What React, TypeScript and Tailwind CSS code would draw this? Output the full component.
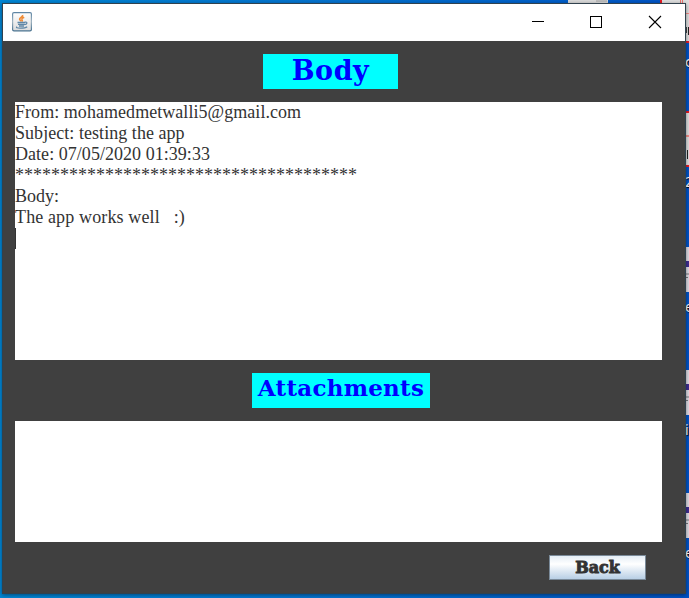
import React from "react";

const MESSAGE = [
  { text: "From: mohamedmetwalli5@gmail.com", style: "tracking-[0.05px]" },
  { text: "Subject: testing the app", style: "tracking-[0.05px]" },
  { text: "Date: 07/05/2020 01:39:33", style: "tracking-[0.04px]" },
  { text: "*".repeat(38), style: "" },
  { text: "Body:", style: "" },
  { text: "The app works well   :)", style: "tracking-[0.13px]" },
];

function JavaIcon() {
  return (
    <svg width="20" height="20" viewBox="0 0 20 20" fill="none">
      <defs>
        <linearGradient id="tile" x1="0" y1="0" x2="0" y2="1">
          <stop offset="0" stopColor="#ffffff" />
          <stop offset="1" stopColor="#dcdcdc" />
        </linearGradient>
        <linearGradient id="edge" x1="0" y1="0" x2="0" y2="1">
          <stop offset="0" stopColor="#5f86a4" />
          <stop offset="0.5" stopColor="#a0b3c0" />
          <stop offset="1" stopColor="#47718f" />
        </linearGradient>
      </defs>
      <rect x="0.6" y="0.6" width="18.8" height="18.2" rx="1.4" fill="url(#tile)" stroke="url(#edge)" strokeWidth="1.2" />
      <path d="M10.600 3c.8 1.800-3.200 2.700-3 4.200.1.900 1.400 1.300 1.300 2.300M12.200 5.200c-1.400.6-2.700 1.400-2.200 2.400.4.700.5 1.200-.1 1.900" stroke="#ef8a35" strokeWidth="1.600" />
      <path d="M5.500 10.500h7.500M6 12.300h6.500M7 14h5M12.800 10.200c3.200-.7 2.500 2.200-.5 2.500" stroke="#5f87a7" strokeWidth="1.300" />
      <path d="M5 14.800c-3 1.700 7.500 2 10.200 0" stroke="#5f87a7" strokeWidth="1.200" />
    </svg>
  );
}

function TitleBar() {
  return (
    <header className="flex h-[37px] shrink-0 items-start justify-between bg-white">
      <div className="pt-2 pl-[9px]">
        <JavaIcon />
      </div>
      <svg width="154" height="37" viewBox="0 0 154 37" fill="none" stroke="#000" shapeRendering="crispEdges">
        <path d="M1 17.500h12" />
        <rect x="59.500" y="12.500" width="11" height="11" />
        <path d="M118 12l12 12M130 12l-12 12" shapeRendering="auto" strokeWidth="1.100" />
      </svg>
    </header>
  );
}

function Shortcut({ label, first = false }: { label: string; first?: boolean }) {
  return (
    <div className="h-[123px]">
      {first ? (
        <div className="h-[56px] border-y-2 border-[#e51a23] bg-[#dedede] pt-[22px]">
          <div className="h-[2px] bg-[#ef8d86]" />
          <div className="mt-[13px] flex h-[9px] gap-px">
            <div className="h-[7px] w-px bg-[#444]" />
            <div className="w-px bg-[#222]" />
          </div>
        </div>
      ) : (
        <div className="h-[45px] bg-[#dddbe2] pt-[14px]">
          <div className="h-[6px] bg-[#3e2d91]" />
          <div className="mt-[6px] h-[2px] bg-[#aaa9af]" />
          <div className="mt-[2px] h-[1px] w-[3px] bg-[#77767b]" />
        </div>
      )}
      <div className="mt-[6px] h-[20px] font-['Noto_Sans',sans-serif] text-[14px] leading-[18px] text-white [text-shadow:1px_1px_1px_#000]">
        {label}
      </div>
    </div>
  );
}

export default function App() {
  return (
    <div className="relative h-[598px] w-[689px] overflow-hidden bg-linear-to-r from-[#0286d4] via-[#0572cf] via-50% to-[#0052c5]">
      <div className="absolute top-0 left-[568px] flex h-[3px] w-[40px] bg-[#dadada]">
        <div className="ml-[28px] h-[2px] w-[11px] bg-[#bdbdbd]" />
      </div>
      <div className="absolute top-0 left-[660px] h-[43px] w-[29px] border-b-2 border-l-2 border-[#e51a23] bg-[#dedede]">
        <div className="ml-[18px] h-[4px] w-[3px] border-x border-[#ef7670]" />
        <div className="mt-[9px] ml-[24px] h-[1px] bg-[#ef8d86]" />
        <div className="mt-[13px] ml-[24px] flex h-[8px] gap-px">
          <div className="h-[6px] w-px bg-[#444]" />
          <div className="w-px bg-[#222]" />
        </div>
      </div>
      <div className="absolute top-[53px] left-[685px] font-['Noto_Sans',sans-serif] text-[14px] leading-[18px] text-white [text-shadow:1px_1px_1px_#000]">c</div>
      <div className="absolute top-[111px] left-[685px] w-1">
        <Shortcut label="2" first />
        <div className="h-[13px]" />
        <Shortcut label="e" />
        <Shortcut label="i" />
        <Shortcut label="e" />
      </div>

      <main className="absolute top-[3px] left-[2px] flex h-[591px] w-[684px] flex-col border border-[#31424e] bg-[#404040] shadow-[0_1px_4px_rgba(0,0,0,0.45)]">
        <TitleBar />
        <div className="flex flex-1 flex-col items-start pt-[13px] pl-3">
          <h1 className="ml-[248px] h-[35px] w-[135px] bg-[#00ffff] text-center font-['DejaVu_Serif',serif] text-[27px] leading-[33px] font-bold tracking-[0.500px] text-[#0000ff]">
            Body
          </h1>
          <section className="mt-[13px] h-[258px] w-[647px] bg-white font-['Liberation_Serif',serif] text-[18px] leading-[21px] whitespace-pre text-[#333]">
            {MESSAGE.map(({ text, style }) => (
              <p key={text} className={style}>{text}</p>
            ))}
            <div className="h-[21px] w-px bg-[#333]" />
          </section>
          <h2 className="mt-[13px] ml-[237px] h-[35px] w-[178px] bg-[#00ffff] text-center font-['DejaVu_Serif',serif] text-[23px] leading-[29px] font-bold tracking-[0.250px] text-[#0000ff]">
            Attachments
          </h2>
          <section className="mt-[13px] h-[121px] w-[647px] bg-white" />
          <button className="mt-[13px] ml-[534px] h-[25px] w-[97px] border border-[#7a8a99] bg-linear-to-b from-[#e4edf5] via-white via-35% to-[#b8cfe5] font-['DejaVu_Serif',serif] text-[16px] leading-[23px] font-bold text-[#333] [-webkit-text-stroke:0.900px_#333]">
            Back
          </button>
        </div>
      </main>
    </div>
  );
}
